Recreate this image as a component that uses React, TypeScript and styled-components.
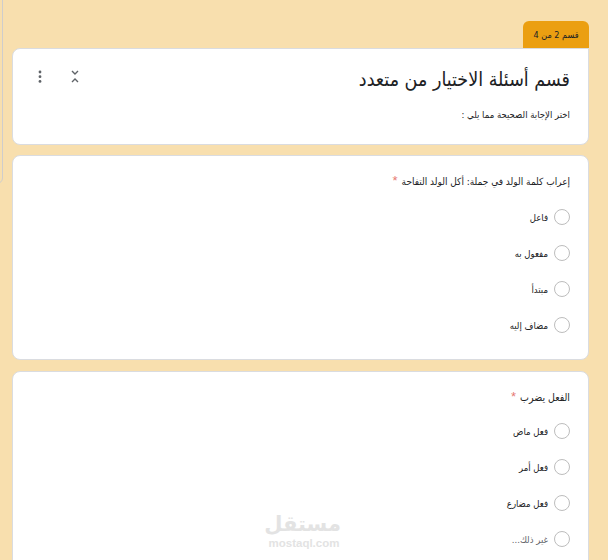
import React from "react";
import styled, { createGlobalStyle } from "styled-components";

const Global = createGlobalStyle`
  html, body { margin: 0; padding: 0; height: 560px; overflow: hidden; background: #f8dfae; }
  #root { height: 560px; overflow: hidden; }
`;

const Page = styled.div`
  position: relative;
  width: 608px;
  height: 560px;
  box-sizing: border-box;
  padding: 21px 19px 0 12px;
  background: #f8dfae;
  font-family: "DejaVu Sans Condensed", "DejaVu Sans", sans-serif;
  font-stretch: condensed;
  overflow: hidden;
`;

const SideEdge = styled.div`
  position: absolute;
  left: -8px;
  top: -4px;
  width: 11px;
  height: 188px;
  border: 1px solid #cfcdcc;
  border-radius: 0 0 6px 0;
  box-sizing: border-box;
`;

const Tab = styled.div`
  margin-left: auto;
  width: 66px;
  height: 27px;
  background: #eb9f11;
  border-radius: 6px 6px 0 0;
  display: flex;
  align-items: center;
  justify-content: center;
  font-size: 9px;
  color: #202124;
`;

const Card = styled.section<{ $height: number; $gap: number }>`
  direction: rtl;
  height: ${(p) => p.$height}px;
  box-sizing: border-box;
  background: #fff;
  border: 1px solid #dadce0;
  border-radius: 8px;
  margin-bottom: ${(p) => p.$gap}px;
`;

const HeaderCard = styled(Card)`
  border-top-right-radius: 0;
  padding: 17px 18px 0 24px;
`;

const TitleRow = styled.div`
  display: flex;
  justify-content: space-between;
  align-items: flex-start;
`;

const Title = styled.h1`
  margin: 0;
  font-size: 19.5px;
  line-height: 28px;
  font-weight: 400;
  color: #202124;
`;

const Tools = styled.div`
  display: flex;
  gap: 28px;
  padding-top: 4px;
  direction: ltr;
`;

const Description = styled.p`
  margin: 14px 0 0;
  font-size: 9.5px;
  line-height: 14px;
  color: #202124;
`;

const Question = styled.div<{ $size: number; $pad: number }>`
  padding: ${(p) => p.$pad}px 18px 0 0;
  font-size: ${(p) => p.$size}px;
  line-height: 16px;
  color: #202124;
`;

const Star = styled.span`
  color: #d93025;
  opacity: 0.65;
  font-family: "Liberation Sans", sans-serif;
  font-size: 13px;
  margin-right: 4px;
`;

const Options = styled.div<{ $top: number }>`
  margin-top: ${(p) => p.$top}px;
  padding-right: 18px;
  display: flex;
  flex-direction: column;
  gap: 16px;
`;

const Option = styled.label<{ $muted?: boolean }>`
  display: flex;
  align-items: center;
  gap: 6px;
  height: 20px;
  font-size: 9.5px;
  color: ${(p) => (p.$muted ? "#5f6368" : "#202124")};
`;

const Radio = styled.span`
  width: 16px;
  height: 16px;
  box-sizing: border-box;
  border: 1px solid #bdbdbd;
  border-radius: 50%;
  flex: none;
`;

const Mark = styled.div`
  position: absolute;
  left: 267px;
  top: 510px;
  width: 74px;
  direction: rtl;
  text-align: center;
  color: #e3e3e3;
  pointer-events: none;
`;

const MarkWord = styled.div`
  font-family: "DejaVu Sans", sans-serif;
  font-stretch: normal;
  font-size: 21px;
  line-height: 28px;
  font-weight: 700;
`;

const MarkUrl = styled.div`
  direction: ltr;
  font-family: "Liberation Sans", sans-serif;
  font-stretch: normal;
  font-size: 11.5px;
  line-height: 11px;
  font-weight: 700;
`;

const Dots = () => (
  <svg width="6" height="14" viewBox="0 0 6 14" fill="#5f6368">
    <circle cx="3" cy="2" r="1.4" />
    <circle cx="3" cy="6.7" r="1.4" />
    <circle cx="3" cy="11.4" r="1.4" />
  </svg>
);

const Collapse = () => (
  <svg width="8" height="14" viewBox="0 0 8 14" fill="none" stroke="#5f6368" strokeWidth="1.4">
    <path d="M1 1l3 3 3-3" />
    <path d="M1 12l3-3 3 3" />
  </svg>
);

const first = ["فاعل", "مفعول به", "مبتدأ", "مضاف إليه"];
const second = ["فعل ماض", "فعل أمر", "فعل مضارع", "غير ذلك..."];

export default function App() {
  return (
    <Page>
      <Global />
      <SideEdge />
      <Tab dir="rtl">قسم 2 من 4</Tab>
      <HeaderCard $height={97} $gap={10}>
        <TitleRow>
          <Title>قسم أسئلة الاختيار من متعدد</Title>
          <Tools>
            <Dots />
            <Collapse />
          </Tools>
        </TitleRow>
        <Description>اختر الإجابة الصحيحة مما يلي :</Description>
      </HeaderCard>
      <Card $height={205} $gap={11}>
        <Question $size={10} $pad={17}>
          إعراب كلمة الولد في جملة: أكل الولد التفاحة<Star>*</Star>
        </Question>
        <Options $top={17}>
          {first.map((t) => (
            <Option key={t}>
              <Radio />
              {t}
            </Option>
          ))}
        </Options>
      </Card>
      <Card $height={220} $gap={0}>
        <Question $size={10.5} $pad={17}>
          الفعل يضرب<Star>*</Star>
        </Question>
        <Options $top={16}>
          {second.map((t, i) => (
            <Option key={t} $muted={i === 3}>
              <Radio />
              {t}
            </Option>
          ))}
        </Options>
      </Card>
      <Mark>
        <MarkWord>مستقل</MarkWord>
        <MarkUrl>mostaql.com</MarkUrl>
      </Mark>
    </Page>
  );
}
